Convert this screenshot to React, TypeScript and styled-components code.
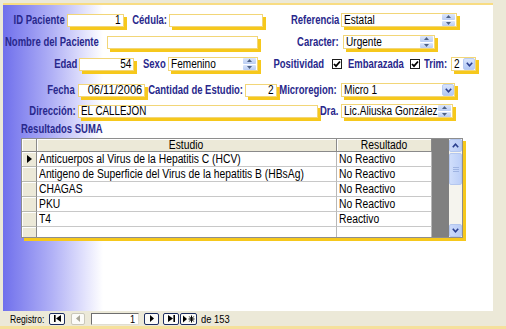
import React from 'react';
import styled, { createGlobalStyle } from 'styled-components';

const Global = createGlobalStyle`
  html, body { margin: 0; padding: 0; background: #ECE9D8; }
  body {
    width: 506px; height: 329px; overflow: hidden;
    font-family: "Liberation Sans", Arial, sans-serif;
  }
  * { box-sizing: border-box; }
`;

const Window = styled.div`
  width: 506px;
  height: 329px;
  display: flex;
  flex-direction: column;
  background: #ECE9D8;
`;

const Main = styled.div`
  height: 311px;
  padding: 3px 0 0 3px;
  display: flex;
`;

const FormPanel = styled.div`
  width: 490px;
  height: 308px;
  border-top: 2px solid #F8DC82;
  background: linear-gradient(90deg, #7070EC 0px, #8A8AF0 20px, #B2B2F6 50px, #E0E0FC 80px, #FFFFFF 100px);
  display: flex;
  flex-direction: column;
  padding-top: 4px;
`;

/* condensed text: the reference uses a narrow face */
const Txt = styled.span<{ $o?: 'left' | 'right' | 'center'; $s?: number }>`
  display: inline-block;
  flex: none;
  white-space: nowrap;
  transform: scaleX(${p => p.$s ?? 0.84});
  transform-origin: ${p => p.$o ?? 'left'} center;
`;

const Row = styled.div<{ $h: number; $mt?: number }>`
  display: flex;
  align-items: center;
  height: ${p => p.$h}px;
  margin-top: ${p => p.$mt ?? 0}px;
  flex: none;
`;

const Label = styled.span<{ $w: number; $align?: 'left' | 'right'; $pl?: number; $pr?: number }>`
  flex: none;
  display: flex;
  justify-content: ${p => (p.$align === 'left' ? 'flex-start' : 'flex-end')};
  width: ${p => p.$w}px;
  padding-left: ${p => p.$pl ?? 0}px;
  padding-right: ${p => p.$pr ?? 2}px;
  font-weight: bold;
  font-size: 12px;
  color: #28288C;
  white-space: nowrap;
`;

const Field = styled.div<{ $w: number; $right?: boolean }>`
  flex: none;
  width: ${p => p.$w}px;
  height: 13px;
  background: #fff;
  border: 1px solid #F2D678;
  box-shadow: 3px 3px 0 #F6C81C;
  display: flex;
  align-items: center;
  justify-content: ${p => (p.$right ? 'flex-end' : 'flex-start')};
  padding: 0 2px;
  font-size: 12px;
  line-height: 12px;
  color: #000;
  white-space: nowrap;
`;

const Combo = styled.div<{ $w: number }>`
  flex: none;
  width: ${p => p.$w}px;
  height: 14px;
  background: #fff;
  border: 1px solid #F2D678;
  box-shadow: 3px 3px 0 #F6C81C;
  display: flex;
  align-items: center;
  font-size: 12px;
  color: #000;
  white-space: nowrap;
`;

const ComboText = styled.span`
  flex: 1;
  min-width: 0;
  display: flex;
  padding-left: 2px;
  overflow: hidden;
`;

const Spin = styled.div`
  flex: none;
  width: 13px;
  height: 12px;
  margin-right: 1px;
  display: flex;
  flex-direction: column;
  gap: 1px;
`;

const SpinBtn = styled.div`
  flex: 1;
  background: linear-gradient(#DCE6FA, #BACDF3);
  border-radius: 1px;
  display: flex;
  align-items: center;
  justify-content: center;
`;

const DropBtn = styled.div`
  flex: none;
  width: 12px;
  height: 12px;
  background: linear-gradient(#D8E4FC, #B2C8F4);
  border: 1px solid #B9CCF2;
  border-radius: 2px;
  display: flex;
  align-items: center;
  justify-content: center;
`;

const Check = styled.div<{ $ml?: number }>`
  flex: none;
  width: 10px;
  height: 10px;
  margin-left: ${p => p.$ml ?? 0}px;
  background: #fff;
  border: 1px solid #1C1C1C;
  display: flex;
  align-items: center;
  justify-content: center;
`;

const SectionTitle = styled.div`
  height: 15px;
  padding-left: 18px;
  display: flex;
  align-items: center;
  font-weight: bold;
  font-size: 12px;
  color: #28288C;
  flex: none;
`;

const GridBox = styled.div`
  margin: 2px 0 0 18px;
  width: 442px;
  height: 100px;
  border: 1px solid #8E8E8E;
  box-shadow: 3px 3px 0 #F6C81C;
  display: flex;
  background: #fff;
  flex: none;
`;

const Table = styled.div`
  width: 410px;
  display: flex;
  flex-direction: column;
  overflow: hidden;
  flex: none;
`;

const TRow = styled.div<{ $h: number }>`
  display: flex;
  height: ${p => p.$h}px;
  flex: none;
`;

const Selector = styled.div<{ $head?: boolean }>`
  flex: none;
  width: 15px;
  background: #ECE9D8;
  border-right: 1px solid #8A8A8A;
  border-bottom: 1px solid ${p => (p.$head ? '#8A8A8A' : '#B8B8B0')};
  box-shadow: inset 1px 1px 0 #FFFFFF;
  display: flex;
  align-items: center;
  justify-content: center;
`;

const HeadCell = styled.div<{ $w: number }>`
  flex: none;
  width: ${p => p.$w}px;
  background: #ECE9D8;
  border-right: 1px solid #8A8A8A;
  border-bottom: 1px solid #8A8A8A;
  box-shadow: inset 1px 1px 0 #FFFFFF;
  display: flex;
  justify-content: center;
  font-size: 12px;
  line-height: 12px;
  color: #000;
`;

const Cell = styled.div<{ $w: number }>`
  flex: none;
  display: flex;
  width: ${p => p.$w}px;
  border-right: 1px solid #B8B8B8;
  border-bottom: 1px solid #C8C8C8;
  padding-left: 2px;
  font-size: 12px;
  line-height: 14px;
  color: #000;
  white-space: nowrap;
  overflow: hidden;
`;

const Filler = styled.div`
  width: 17px;
  flex: none;
  background: #808080;
`;

const ScrollBar = styled.div`
  width: 13px;
  flex: none;
  background: #F5F4EE;
  display: flex;
  flex-direction: column;
`;

const ScrollBtn = styled.div`
  height: 13px;
  flex: none;
  background: linear-gradient(90deg, #CBD9FA, #B9CCF6);
  border: 1px solid #B3C6EE;
  border-radius: 2px;
  display: flex;
  align-items: center;
  justify-content: center;
`;

const Thumb = styled.div`
  height: 32px;
  flex: none;
  margin-top: 1px;
  background: linear-gradient(90deg, #D0DEFB, #BCCFF8);
  border: 1px solid #B4C7EF;
  border-radius: 2px;
  display: flex;
  align-items: center;
  justify-content: center;
`;

const Track = styled.div`
  flex: 1;
`;

const StatusBar = styled.div`
  height: 18px;
  border-bottom: 3px solid #F5E09C;
  display: flex;
  align-items: center;
  padding-left: 10px;
  font-size: 11px;
  color: #000;
  flex: none;
`;

const NavBtn = styled.div<{ $w: number; $ml: number; $off?: boolean }>`
  flex: none;
  width: ${p => p.$w}px;
  height: 12px;
  margin-left: ${p => p.$ml}px;
  background: #FBFBF8;
  border: 1px solid ${p => (p.$off ? '#C9C7BA' : '#1E2E60')};
  border-radius: 2px;
  display: flex;
  align-items: center;
  justify-content: center;
`;

const NavBox = styled.div`
  flex: none;
  width: 48px;
  height: 12px;
  margin-left: 6px;
  background: #fff;
  border-top: 1px solid #6E6E6E;
  border-left: 1px solid #6E6E6E;
  border-bottom: 1px solid #E0DED2;
  border-right: 1px solid #E0DED2;
  display: flex;
  justify-content: flex-end;
  padding-right: 3px;
  font-size: 11px;
  line-height: 10px;
`;

const NavText = styled.span<{ $w: number; $ml?: number }>`
  flex: none;
  display: flex;
  width: ${p => p.$w}px;
  margin-left: ${p => p.$ml ?? 0}px;
  white-space: nowrap;
`;

const UpArrow = ({ c = '#4D6185' }: { c?: string }) => (
  <svg width="5" height="3" viewBox="0 0 5 3"><path d="M0 3 L2.5 0 L5 3 Z" fill={c} /></svg>
);
const DownArrow = ({ c = '#4D6185' }: { c?: string }) => (
  <svg width="5" height="3" viewBox="0 0 5 3"><path d="M0 0 L2.5 3 L5 0 Z" fill={c} /></svg>
);
const Chevron = ({ up }: { up?: boolean }) => (
  <svg width="7" height="5" viewBox="0 0 7 5">
    <path d={up ? 'M0.8 4.2 L3.5 1.2 L6.2 4.2' : 'M0.8 0.8 L3.5 3.8 L6.2 0.8'} stroke="#2A3F8F" strokeWidth="1.6" fill="none" />
  </svg>
);
const Tick = () => (
  <svg width="8" height="8" viewBox="0 0 8 8">
    <path d="M1 4 L3 6.2 L7 1.5" stroke="#000" strokeWidth="1.8" fill="none" />
  </svg>
);

const SpinBox = () => (
  <Spin>
    <SpinBtn><UpArrow /></SpinBtn>
    <SpinBtn><DownArrow /></SpinBtn>
  </Spin>
);

const Drop = () => (
  <DropBtn><Chevron /></DropBtn>
);

const rows: [string, string][] = [
  ['Anticuerpos al Virus de la Hepatitis C (HCV)', 'No Reactivo'],
  ['Antigeno de Superficie del Virus de la hepatitis B (HBsAg)', 'No Reactivo'],
  ['CHAGAS', 'No Reactivo'],
  ['PKU', 'No Reactivo'],
  ['T4', 'Reactivo'],
  ['', ''],
];

const LS = 0.79; // label condense

export default function App() {
  return (
    <Window>
      <Global />
      <Main>
        <FormPanel>
          <Row $h={22}>
            <Label $w={64}><Txt $o="right" $s={LS}>ID Paciente</Txt></Label>
            <Field $w={57} $right><Txt $o="right">1</Txt></Field>
            <Label $w={45}><Txt $o="right" $s={LS}>Cédula:</Txt></Label>
            <Field $w={94} />
            <Label $w={78}><Txt $o="right" $s={LS}>Referencia</Txt></Label>
            <Combo $w={116}><ComboText><Txt>Estatal</Txt></ComboText><SpinBox /></Combo>
          </Row>
          <Row $h={22}>
            <Label $w={104} $align="left" $pl={2}><Txt $s={LS}>Nombre del Paciente</Txt></Label>
            <Field $w={151} />
            <Label $w={85} $pr={4}><Txt $o="right" $s={LS}>Caracter:</Txt></Label>
            <Combo $w={92}><ComboText><Txt>Urgente</Txt></ComboText><SpinBox /></Combo>
          </Row>
          <Row $h={22}>
            <Label $w={76}><Txt $o="right" $s={LS}>Edad</Txt></Label>
            <Field $w={55} $right><Txt $o="right">54</Txt></Field>
            <Label $w={34}><Txt $o="right" $s={LS}>Sexo</Txt></Label>
            <Combo $w={90}><ComboText><Txt>Femenino</Txt></ComboText><SpinBox /></Combo>
            <Label $w={66} $pr={0}><Txt $o="right" $s={LS}>Positividad</Txt></Label>
            <Check $ml={8}><Tick /></Check>
            <Label $w={68} $align="left" $pl={6}><Txt $s={LS}>Embarazada</Txt></Label>
            <Check><Tick /></Check>
            <Label $w={31} $align="left" $pl={4}><Txt $s={LS}>Trim:</Txt></Label>
            <Combo $w={25}><ComboText><Txt>2</Txt></ComboText><Drop /></Combo>
          </Row>
          <Row $h={22} $mt={4}>
            <Label $w={75} $pr={3}><Txt $o="right" $s={LS}>Fecha</Txt></Label>
            <Field $w={67} $right><Txt $o="right" $s={0.92}>06/11/2006</Txt></Field>
            <Label $w={100}><Txt $o="right" $s={LS}>Cantidad de Estudio:</Txt></Label>
            <Field $w={32} $right><Txt $o="right">2</Txt></Field>
            <Label $w={64} $pr={4}><Txt $o="right" $s={LS}>Microregion:</Txt></Label>
            <Combo $w={114}><ComboText><Txt>Micro 1</Txt></ComboText><Drop /></Combo>
          </Row>
          <Row $h={20}>
            <Label $w={75}><Txt $o="right" $s={LS}>Dirección:</Txt></Label>
            <Field $w={240}><Txt $s={0.82}>EL CALLEJON</Txt></Field>
            <Label $w={23} $pr={3}><Txt $o="right" $s={LS}>Dra.</Txt></Label>
            <Combo $w={112}><ComboText><Txt>Lic.Aliuska González</Txt></ComboText><SpinBox /></Combo>
          </Row>
          <SectionTitle><Txt $s={LS}>Resultados SUMA</Txt></SectionTitle>
          <GridBox>
            <Table>
              <TRow $h={13}>
                <Selector $head />
                <HeadCell $w={300}><Txt $o="center" $s={0.86}>Estudio</Txt></HeadCell>
                <HeadCell $w={95}><Txt $o="center" $s={0.86}>Resultado</Txt></HeadCell>
              </TRow>
              {rows.map(([e, r], i) => (
                <TRow $h={15} key={i}>
                  <Selector>
                    {i === 0 && (
                      <svg width="5" height="8" viewBox="0 0 5 8"><path d="M0 0 L5 4 L0 8 Z" fill="#000" /></svg>
                    )}
                  </Selector>
                  <Cell $w={300}><Txt $s={0.86}>{e}</Txt></Cell>
                  <Cell $w={95}><Txt $s={0.86}>{r}</Txt></Cell>
                </TRow>
              ))}
            </Table>
            <Filler />
            <ScrollBar>
              <ScrollBtn><Chevron up /></ScrollBtn>
              <Thumb>
                <svg width="6" height="5" viewBox="0 0 6 5">
                  <path d="M0 0.5 H6 M0 2.5 H6 M0 4.5 H6" stroke="#9FB4E2" strokeWidth="1" />
                </svg>
              </Thumb>
              <Track />
              <ScrollBtn><Chevron /></ScrollBtn>
            </ScrollBar>
          </GridBox>
        </FormPanel>
      </Main>
      <StatusBar>
        <NavText $w={33}><Txt $s={0.78}>Registro:</Txt></NavText>
        <NavBtn $w={16} $ml={6}>
          <svg width="7" height="7" viewBox="0 0 7 7"><path d="M0 0 H1.6 V7 H0 Z M7 0 L2 3.5 L7 7 Z" fill="#000" /></svg>
        </NavBtn>
        <NavBtn $w={14} $ml={6} $off>
          <svg width="4" height="7" viewBox="0 0 4 7"><path d="M4 0 L0 3.5 L4 7 Z" fill="#A9A79A" /></svg>
        </NavBtn>
        <NavBox><Txt $o="right">1</Txt></NavBox>
        <NavBtn $w={15} $ml={5}>
          <svg width="4" height="7" viewBox="0 0 4 7"><path d="M0 0 L4 3.5 L0 7 Z" fill="#000" /></svg>
        </NavBtn>
        <NavBtn $w={16} $ml={4}>
          <svg width="7" height="7" viewBox="0 0 7 7"><path d="M0 0 L5 3.5 L0 7 Z M5.4 0 H7 V7 H5.4 Z" fill="#000" /></svg>
        </NavBtn>
        <NavBtn $w={17} $ml={1}>
          <svg width="12" height="8" viewBox="0 0 12 8">
            <path d="M0 0.5 L4 4 L0 7.5 Z" fill="#000" />
            <path d="M8.5 0.5 V7.5 M5.5 4 H11.5 M6.3 1.5 L10.7 6.5 M10.7 1.5 L6.3 6.5" stroke="#000" strokeWidth="1" />
          </svg>
        </NavBtn>
        <NavText $w={34} $ml={4}><Txt $s={0.85}>de 153</Txt></NavText>
      </StatusBar>
    </Window>
  );
}
